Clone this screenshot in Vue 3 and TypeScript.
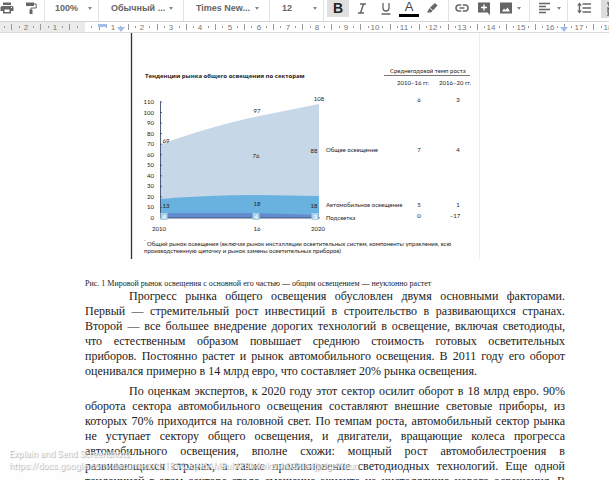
<script setup lang="ts">
interface Tick { x: number; label?: string; height: number }

const ticks: Tick[] = []
for (let q = -11; q <= 73; q++) {
  const x = Math.round(84 + (q * 29.1) / 4)
  if (q % 4 === 0) {
    if (q !== 0) ticks.push({ x, label: String(Math.abs(q / 4)), height: 0 })
  } else {
    ticks.push({ x, height: q % 2 === 0 ? 6 : 2 })
  }
}

const paragraphs: string[][] = [
  [
    'Прогресс рынка общего освещения обусловлен двумя основными факторами.',
    'Первый — стремительный рост инвестиций в строительство в развивающихся странах.',
    'Второй — все большее внедрение дорогих технологий в освещение, включая светодиоды,',
    'что естественным образом повышает среднюю стоимость готовых осветительных',
    'приборов. Постоянно растет и рынок автомобильного освещения. В 2011 году его оборот',
    'оценивался примерно в 14 млрд евро, что составляет 20% рынка освещения.',
  ],
  [
    'По оценкам экспертов, к 2020 году этот сектор осилит оборот в 18 млрд евро. 90%',
    'оборота сектора автомобильного освещения составляют внешние световые приборы, из',
    'которых 70% приходится на головной свет. По темпам роста, автомобильный сектор рынка',
    'не уступает сектору общего освещения, и двигатели, вращающие колеса прогресса',
    'автомобильного освещения, вполне схожи: мощный рост автомобилестроения в',
    'развивающихся странах, а также проникновение светодиодных технологий. Еще одной',
    'тенденцией в этом секторе стало смещение акцента на инсталляцию нового освещения. В',
  ],
]

const axis = [0, 10, 20, 30, 40, 50, 60, 70, 80, 90, 100, 110].map((value) => ({
  value,
  y: 218 - value * 1.055,
}))

const markers = [
  { x: 164, value: 4 },
  { x: 256, value: 4 },
  { x: 315, value: 3 },
]
</script>

<template>
  <div class="editor">
    <header class="toolbar">
      <div class="group print">
        <button class="tool" aria-label="Печать">
          <svg width="14" height="14" viewBox="0 0 14 14"><path d="M3 1.500h8v2.500H3zM2 5h10a1.500 1.500 0 0 1 1.500 1.500V10H11v2.500H3V10H.5V6.500A1.500 1.500 0 0 1 2 5zm2.500 3.500V11h5V8.500zM11 6v1h1V6z" fill="#666" fill-rule="evenodd" /></svg>
        </button>
        <button class="tool" aria-label="Копировать форматирование">
          <svg width="14" height="14" viewBox="0 0 14 14"><path d="M10 3h2.200v4H7v3" fill="none" stroke="#666" /><path d="M2 1.500h8V5H2zM5.500 8.500h3V13h-3z" fill="#666" /></svg>
        </button>
      </div>
      <button class="group drop zoom"><span>100%</span><i class="caret" /></button>
      <button class="group drop para"><span>Обычный ...</span><i class="caret" /></button>
      <button class="group drop face"><span>Times New...</span><i class="caret" /></button>
      <button class="group drop size"><span>12</span><i class="caret" /></button>
      <div class="group format">
        <button class="tool letter on" aria-label="Полужирный"><b>B</b></button>
        <button class="tool letter" aria-label="Курсив"><svg width="12" height="14" viewBox="0 0 12 14"><path d="M4 3h6M2 12h6M7.500 3l-3 9" stroke="#666" stroke-width="1.500" /></svg></button>
        <button class="tool letter" aria-label="Подчеркнутый"><svg width="12" height="14" viewBox="0 0 12 14"><path d="M3 2v5a3 3 0 0 0 6 0V2M1.500 13h9" fill="none" stroke="#666" stroke-width="1.300" /></svg></button>
        <button class="tool letter color" aria-label="Цвет текста">A</button>
        <button class="tool letter" aria-label="Цвет выделения">
          <svg width="14" height="14" viewBox="0 0 14 14"><path d="M10 2l2.500 2.500-4.500 5L5 6.500z" fill="#666" /><path d="M4.500 7l3 3L6 11.500H2z" fill="#666" /></svg>
        </button>
      </div>
      <div class="group insert">
        <button class="tool" aria-label="Вставить ссылку">
          <svg width="14" height="14" viewBox="0 0 14 14"><path d="M6.200 4H4a3 3 0 0 0 0 6h2.200M7.800 4H10a3 3 0 0 1 0 6H7.800M4.500 7h5" fill="none" stroke="#666" stroke-width="1.500" /></svg>
        </button>
        <button class="tool" aria-label="Комментарий">
          <svg width="14" height="14" viewBox="0 0 14 14"><path d="M1 1.500h12V14l-2.500-2.500H1zM6.300 3.500v2.300H4v1.400h2.300v2.300h1.400V7.200H10V5.800H7.700V3.500z" fill="#666" fill-rule="evenodd" /></svg>
        </button>
        <button class="tool" aria-label="Изображение">
          <svg width="14" height="14" viewBox="0 0 14 14"><path d="M1 1.500h12v11H1zM3 10.500h8L8.500 6.500l-2 2.500L5 7.500z" fill="#666" fill-rule="evenodd" /></svg>
        </button>
        <i class="caret" />
      </div>
      <div class="group align">
        <button class="tool" aria-label="Выравнивание">
          <svg width="12" height="14" viewBox="0 0 12 14"><path d="M0 2.500h11M0 5.500h7M0 8.500h11M0 11.500h7" stroke="#666" stroke-width="1.300" /></svg>
        </button>
        <i class="caret" />
      </div>
      <div class="group spacing">
        <button class="tool" aria-label="Интервал">
          <svg width="14" height="14" viewBox="0 0 14 14"><path d="M5.500 3H14M5.500 7H14M5.500 11H14M2.500 3v8" stroke="#666" stroke-width="1.500" /><path d="M0 4.500L2.500 1.500 5 4.500zM0 9.500l2.500 3 2.500-3z" fill="#666" /></svg>
        </button>
      </div>
      <button class="list" aria-label="Список">
        <svg width="10" height="14" viewBox="0 0 10 14"><path d="M1 1h2v3M1 6h2v2H1M1 10h2v3H1M6 2.500h4M6 7h4M6 11.500h4" fill="none" stroke="#444" stroke-width="1.200" /></svg>
      </button>
    </header>

    <div class="ruler">
      <div class="ruler-page" />
      <svg class="scale" width="640" height="10" viewBox="0 0 640 10">
        <template v-for="t in ticks" :key="t.x">
          <text v-if="t.label" :x="t.x" y="8" text-anchor="middle">{{ t.label }}</text>
          <rect v-else :x="t.x" :y="5 - t.height / 2" width="1" :height="t.height" fill="#999" />
        </template>
        <path d="M98 2h9v3h-9zM117 5h8l-4 5zM560 5h8l-4 5z" fill="#a3bdea" />
      </svg>
    </div>

    <main class="paper">
      <svg class="figure" width="350" height="226" viewBox="130 33 350 226" role="img" aria-label="Тенденции рынка общего освещения по секторам">
        <path d="M131.500 33v226" stroke="#333" stroke-width="1.300" />
        <path d="M479.500 33v226" stroke="#ececec" />
        <text class="title" x="145" y="78">Тенденции рынка общего освещения по секторам</text>
        <text x="390" y="73">Среднегодовой темп роста</text>
        <path d="M384 75.500h86" stroke="#555" stroke-width=".8" />
        <text x="413" y="85" text-anchor="middle">2010–16 гг.</text>
        <text x="455" y="85" text-anchor="middle">2016–20 гг.</text>

        <path d="M160 144.500Q215 125 257 116.500L319 104v114H160z" fill="#c6d7e7" />
        <path d="M160 199Q210 195 257 195l62 1v22H160z" fill="#69b1df" />
        <path d="M160 213h97l62 2v3H160z" fill="#648bcd" />
        <path d="M160.500 101.500V218H320" fill="none" stroke="#3d4f70" stroke-width=".9" />
        <g v-for="a in axis" :key="a.value">
          <path :d="`M160 ${a.y}h2`" stroke="#445" stroke-width=".8" />
          <text x="154" :y="a.y + 2" text-anchor="end">{{ a.value }}</text>
        </g>
        <g v-for="m in markers" :key="m.x">
          <rect :x="m.x - 3.500" y="213" width="7" height="7" fill="#a9d2e8" />
          <text class="mark" :x="m.x" y="219" text-anchor="middle">{{ m.value }}</text>
        </g>
        <g text-anchor="middle">
          <text x="166" y="143">69</text>
          <text x="257" y="113">97</text>
          <text x="319" y="101">108</text>
          <text x="256" y="158">76</text>
          <text x="314" y="153">88</text>
          <text x="166" y="208">13</text>
          <text x="257" y="206">18</text>
          <text x="314" y="208">18</text>
          <text x="159" y="231">2010</text>
          <text x="257" y="231">16</text>
          <text x="318" y="231">2020</text>
          <text x="419" y="102">6</text>
          <text x="458" y="102">3</text>
          <text x="419" y="152">7</text>
          <text x="458" y="152">4</text>
          <text x="419" y="207">5</text>
          <text x="458" y="207">1</text>
          <text x="419" y="218">0</text>
          <text x="455" y="218">–17</text>
        </g>
        <text x="326" y="152">Общее освещение</text>
        <text x="326" y="207">Автомобильное освещение</text>
        <text x="326" y="220">Подсветка</text>
        <text class="star" x="144" y="243">*</text>
        <text x="147" y="246">Общий рынок освещения (включая рынок инсталляции осветительных систем, компоненты управления, всю</text>
        <text x="144" y="253">производственную цепочку и рынок замены осветительных приборов)</text>
      </svg>

      <p class="caption">Рис. 1 Мировой рынок освещения с основной его частью — общим освещением — неуклонно растет</p>
      <p v-for="(lines, i) in paragraphs" :key="i" class="body">
        <span v-for="line in lines" :key="line" class="line">{{ line }}</span>
      </p>
    </main>

    <div class="stamp">
      <div>Explain and Send Screenshots</div>
      <div>https://docs.google.com/document/d/1BFCJqN6AM9uM7Sb4wkznMXDlIa4jpdgzWeun</div>
    </div>
  </div>
</template>

<style>
body { overflow: hidden; background: #fefefe; }
</style>

<style scoped>
.editor {
  position: relative;
  height: 100vh;
  overflow: hidden;
  font-family: "Liberation Sans", Arial, sans-serif;
  color: #444;
}
.toolbar {
  display: flex;
  height: 21px;
  overflow: hidden;
  background: #fff;
  border-bottom: 1px solid #d5d5d5;
}
button {
  margin: 0;
  padding: 0;
  border: 0;
  background: none;
  color: inherit;
  font: inherit;
  font-size: 9px;
  white-space: nowrap;
}
.group {
  box-sizing: border-box;
  display: flex;
  flex: none;
  align-items: center;
  height: 21px;
  padding-bottom: 5px;
  border-right: 1px solid #e2e2e2;
}
.tool { display: flex; flex: none; align-items: center; justify-content: center; }
.print { width: 45px; gap: 10px; }
.drop { justify-content: space-between; padding-right: 6px; font-weight: bold; color: #666; }
.zoom { width: 54px; padding-left: 10px; }
.para { width: 85px; padding-left: 12px; padding-right: 10px; }
.face { width: 86px; padding-left: 12px; padding-right: 10px; }
.size { width: 54px; padding-left: 12px; }
.caret {
  flex: none;
  border: 2px solid transparent;
  border-top: 3px solid #888;
  border-bottom: 0;
}
.format { width: 125px; padding-left: 3px; gap: 2px; }
.letter { width: 22px; height: 18px; font-size: 13px; }
.on { background: #e0e0e0; color: #222; font-size: 14px; }
.color { box-sizing: border-box; width: 20px; height: 17px; border-bottom: 3px solid #000; }
.insert { width: 81px; padding-left: 6px; gap: 8px; }
.insert .caret { margin-left: -4px; }
.align { width: 38px; padding-left: 9px; gap: 6px; }
.spacing { width: 33px; padding-left: 9px; border-right: 0; }
.list { display: flex; flex: 1; align-items: center; height: 18px; padding-left: 5px; background: #ddd; }

.ruler {
  display: grid;
  height: 10px;
  padding-right: 44px;
  padding-left: 85px;
  overflow: hidden;
  background: #ebebeb;
  border-bottom: 1px solid #dcdcdc;
}
.ruler-page, .scale { grid-area: 1 / 1; }
.ruler-page { background: #fff; }
.scale { margin-left: -85px; font-size: 8px; fill: #777; }

.paper { padding: 0 44px 0 85px; }
.figure {
  display: block;
  margin-left: 45px;
  font-family: Lato, Roboto, sans-serif;
  font-size: 6px;
  fill: #222;
}
.title { font-family: "Open Sans", sans-serif; font-weight: bold; }
.mark { fill: #fff; font-weight: bold; }
.star { font-size: 4px; }
.caption {
  margin: 20px 0 0;
  font: 8px/10px "Liberation Serif", "Times New Roman", serif;
  color: #222;
  white-space: nowrap;
}
.body {
  margin: 0 0 5px;
  font: 12px/15px "Liberation Serif", "Times New Roman", serif;
  color: #222;
}
.line { display: block; white-space: nowrap; text-align: justify; text-align-last: justify; }
.line:first-child { padding-left: 44px; }
.body:nth-of-type(2) .line:last-child { text-align-last: left; }
.stamp {
  position: absolute;
  bottom: 8px;
  left: 9px;
  font-family: Roboto, sans-serif;
  font-size: 9px;
  line-height: 12px;
  color: rgba(255, 255, 255, 0.8);
  white-space: nowrap;
  text-shadow: 1px 1px 1px #aaa;
}
</style>
